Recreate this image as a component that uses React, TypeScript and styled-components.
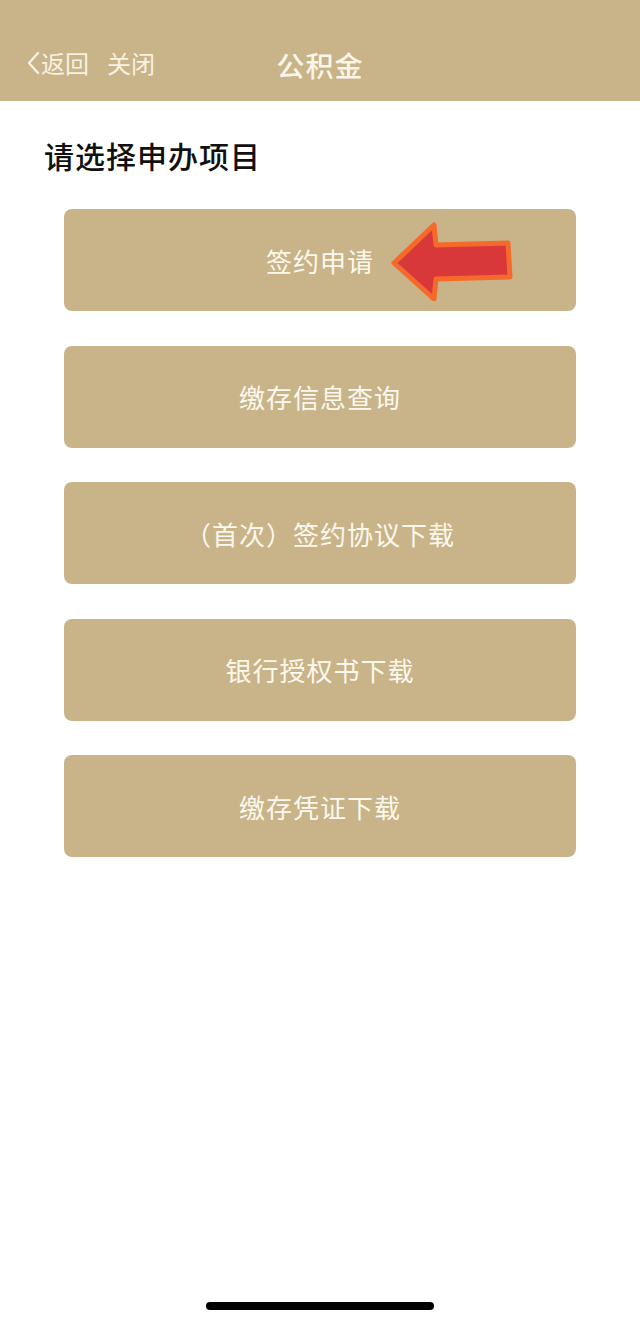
import React from 'react';
import styled, { createGlobalStyle } from 'styled-components';

const GlobalStyle = createGlobalStyle`
    html, body {
        margin: 0;
        padding: 0;
        background: #ffffff;
    }
    body {
        font-family: "Noto Sans CJK SC", "Noto Sans", sans-serif;
    }
`;

const Styled = {
    Page: styled.div`
        width: 640px;
        height: 1324px;
        display: flex;
        flex-direction: column;
        background: #ffffff;
        overflow: hidden;
    `,
    Header: styled.header`
        position: relative;
        height: 101px;
        background-color: #c8b488;
        display: flex;
        align-items: center;
        justify-content: center;
        padding-top: 28px;
        box-sizing: border-box;
    `,
    NavLeft: styled.div`
        position: absolute;
        left: 26px;
        top: 45px;
        display: flex;
        align-items: center;
        gap: 18px;
        color: #f7f1e2;
        font-size: 24px;
    `,
    NavLink: styled.span`
        display: flex;
        align-items: center;
        gap: 1px;
    `,
    Title: styled.h1`
        margin: 0;
        color: #fbf6ea;
        font-size: 28px;
        font-weight: 500;
        letter-spacing: 1px;
    `,
    Content: styled.main`
        flex: 1;
        display: flex;
        flex-direction: column;
        padding: 34px 64px 0;
    `,
    Heading: styled.h2`
        margin: 0 0 34px -20px;
        font-size: 30px;
        font-weight: 500;
        color: #111111;
        letter-spacing: 1px;
        line-height: 40px;
    `,
    List: styled.div`
        display: flex;
        flex-direction: column;
        gap: 34.5px;
    `,
    Item: styled.button`
        position: relative;
        height: 102px;
        border: none;
        border-radius: 8px;
        background-color: #c8b488;
        color: #fcf8ee;
        font-family: inherit;
        font-size: 26px;
        letter-spacing: 1px;
        display: flex;
        align-items: center;
        justify-content: center;
        padding: 0;
    `,
    Arrow: styled.svg`
        position: absolute;
        left: 326px;
        top: 12px;
        width: 124px;
        height: 80px;
    `,
    HomeBar: styled.div`
        width: 228px;
        height: 8px;
        border-radius: 4px;
        background: #000000;
        margin: 0 auto 14px;
    `,
};

const items = ['签约申请', '缴存信息查询', '（首次）签约协议下载', '银行授权书下载', '缴存凭证下载'];

const App: React.FC = () => {
    return (
        <>
            <GlobalStyle />
            <Styled.Page>
                <Styled.Header>
                    <Styled.NavLeft>
                        <Styled.NavLink>
                            <svg width="14" height="24" viewBox="0 0 14 24">
                                <path d="M12 2 L3 12 L12 22" fill="none" stroke="#f7f1e2" strokeWidth="2.4" strokeLinecap="round" strokeLinejoin="round" />
                            </svg>
                            返回
                        </Styled.NavLink>
                        <Styled.NavLink>关闭</Styled.NavLink>
                    </Styled.NavLeft>
                    <Styled.Title>公积金</Styled.Title>
                </Styled.Header>
                <Styled.Content>
                    <Styled.Heading>请选择申办项目</Styled.Heading>
                    <Styled.List>
                        {items.map((label, i) => (
                            <Styled.Item key={label}>
                                {label}
                                {i === 0 && (
                                    <Styled.Arrow viewBox="0 0 124 80">
                                        <path
                                            d="M4 42 L44 4 L46 24 L118 22 L120 56 L46 58 L44 78 Z"
                                            fill="#d9383a"
                                            stroke="#f56a2a"
                                            strokeWidth="5"
                                            strokeLinejoin="round"
                                        />
                                    </Styled.Arrow>
                                )}
                            </Styled.Item>
                        ))}
                    </Styled.List>
                </Styled.Content>
                <Styled.HomeBar />
            </Styled.Page>
        </>
    );
};

export default App;
